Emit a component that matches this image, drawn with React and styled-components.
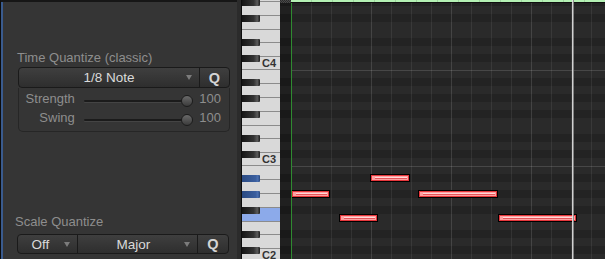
import React from 'react';
import styled, { createGlobalStyle } from 'styled-components';

const GlobalStyle = createGlobalStyle`
  html, body {
    margin: 0;
    padding: 0;
    background: #111;
  }
  body {
    font-family: "Liberation Sans", Arial, sans-serif;
  }
`;

const TOP_NOTE = 71;
const BOTTOM_NOTE = 36;
const ROW = 8;
const BLACK = [1, 3, 6, 8, 10];
const HIGHLIGHT = [46, 44, 41];

const pitches = [];
for (let n = TOP_NOTE; n >= BOTTOM_NOTE; n--) pitches.push(n);

const isBlack = (n) => BLACK.includes(n % 12);
const whiteKeys = pitches.filter((n) => !isBlack(n));
const blackKeys = pitches.filter(isBlack);
const keyHeight = (n) => ([0, 2, 4].includes(n % 12) ? 40 / 3 : 14);
const rowTop = (n) => (TOP_NOTE - n) * ROW;

const regions = [
  { pitch: 44, x: -1, w: 39 },
  { pitch: 41, x: 47, w: 39 },
  { pitch: 46, x: 78, w: 40 },
  { pitch: 44, x: 126, w: 80 },
  { pitch: 41, x: 206, w: 79 },
];

const App = () => {
  return (
    <>
      <GlobalStyle />
      <Screen>
        <Panel>
          <Section>
            <FieldLabel $indent={16}>Time Quantize (classic)</FieldLabel>
            <ButtonBar $indent={17} $h={21}>
              <Segment $grow $padL={17}>
                <SegText>1/8 Note</SegText>
                <Arrow />
              </Segment>
              <QButton $w={30}>Q</QButton>
            </ButtonBar>
            <SliderGroup>
              <SliderRow>
                <SliderLabel>Strength</SliderLabel>
                <Slider>
                  <Groove />
                  <Knob />
                </Slider>
                <ValueText>100</ValueText>
              </SliderRow>
              <SliderRow>
                <SliderLabel>Swing</SliderLabel>
                <Slider>
                  <Groove />
                  <Knob />
                </Slider>
                <ValueText>100</ValueText>
              </SliderRow>
            </SliderGroup>
          </Section>

          <Spacer />

          <Section>
            <FieldLabel $indent={14}>Scale Quantize</FieldLabel>
            <ButtonBar $indent={16} $h={20} $gap={4}>
              <Segment $w={59} $padL={3}>
                <SegText>Off</SegText>
                <Arrow />
              </Segment>
              <Segment $w={120} $padL={9} $divider>
                <SegText>Major</SegText>
                <Arrow />
              </Segment>
              <QButton $w={31}>Q</QButton>
            </ButtonBar>
          </Section>
        </Panel>

        <KeyGutter />

        <Piano>
          <PianoTrack>
            {whiteKeys.map((n) => (
              <WhiteKey key={n} $h={keyHeight(n)} $lit={HIGHLIGHT.includes(n)}>
                {n % 12 === 0 && <KeyName>C{n / 12 - 1}</KeyName>}
              </WhiteKey>
            ))}
            {blackKeys.map((n) => (
              <BlackKey key={n} $top={rowTop(n) + 1} $lit={HIGHLIGHT.includes(n)} />
            ))}
          </PianoTrack>
        </Piano>

        <Hatch>
          <HatchTop />
          <HatchTrack>
            {pitches.map((n) => (
              <HatchRow key={n} $black={isBlack(n)} />
            ))}
          </HatchTrack>
        </Hatch>

        <Roll>
          <Ruler />
          <Lane>
            <LaneTrack>
              {pitches.map((n) => (
                <GridRow key={n} $black={isBlack(n)} $octave={n % 12 === 11} />
              ))}
              {regions.map((r, i) => (
                <Region key={i} style={{ top: rowTop(r.pitch), left: r.x, width: r.w }} />
              ))}
            </LaneTrack>
          </Lane>
          <Playhead />
        </Roll>
      </Screen>
    </>
  );
};

export default App;

const Screen = styled.div`
  display: flex;
  width: 605px;
  height: 259px;
  overflow: hidden;
  background: #2a2a2a;
`;

/* ---------- left inspector ---------- */

const Panel = styled.div`
  width: 237px;
  flex-shrink: 0;
  box-sizing: border-box;
  height: 100%;
  display: flex;
  flex-direction: column;
  padding: 48px 0 5px;
  background: #353535;
  border-top: 2px solid #161616;
  border-left: 1px solid #0c0c0c;
  box-shadow: inset 2px 0 0 #3a5b8e;
`;

const Section = styled.div`
  display: flex;
  flex-direction: column;
`;

const Spacer = styled.div`
  flex: 1;
`;

const FieldLabel = styled.div`
  margin-left: ${(p) => p.$indent}px;
  font-size: 13px;
  line-height: 16px;
  color: #8e8e8e;
`;

const ButtonBar = styled.div`
  display: flex;
  box-sizing: border-box;
  width: 212px;
  height: ${(p) => p.$h}px;
  margin: ${(p) => p.$gap || 1}px 0 0 ${(p) => p.$indent}px;
  border: 1px solid #1a1a1a;
  border-radius: 4px;
  background: linear-gradient(#3f3f3f, #2e2e2e);
  position: relative;
  z-index: 1;
`;

const Segment = styled.div`
  display: flex;
  align-items: center;
  box-sizing: border-box;
  ${(p) => (p.$grow ? 'flex: 1;' : `width: ${p.$w}px;`)}
  padding: 0 7px 0 ${(p) => p.$padL}px;
  border-left: ${(p) => (p.$divider ? '1px solid #1a1a1a' : 'none')};
`;

const SegText = styled.span`
  flex: 1;
  text-align: center;
  font-size: 13.5px;
  color: #dadada;
`;

const Arrow = styled.span`
  width: 0;
  height: 0;
  margin-left: 4px;
  border-left: 3.5px solid transparent;
  border-right: 3.5px solid transparent;
  border-top: 5px solid #7c7c7c;
`;

const QButton = styled.div`
  display: flex;
  align-items: center;
  justify-content: center;
  box-sizing: border-box;
  width: ${(p) => p.$w}px;
  border-left: 1px solid #1a1a1a;
  font-size: 14.5px;
  font-weight: bold;
  color: #d4d4d4;
`;

const SliderGroup = styled.div`
  box-sizing: border-box;
  width: 212px;
  margin-left: 17px;
  padding: 1px 8px 4px 0;
  border: 1px solid #262626;
  border-top: none;
  border-radius: 0 0 5px 5px;
`;

const SliderRow = styled.div`
  display: flex;
  align-items: center;
  height: 19px;
`;

const SliderLabel = styled.div`
  width: 56px;
  text-align: right;
  font-size: 13px;
  color: #8e8e8e;
`;

const Slider = styled.div`
  position: relative;
  display: flex;
  align-items: center;
  box-sizing: border-box;
  width: 111px;
  height: 19px;
  padding-top: 4px;
  margin: 0 5px 0 9px;
`;

const Groove = styled.div`
  flex: 1;
  height: 2px;
  margin-right: 10px;
  border-radius: 1px;
  background: #1b1b1b;
  box-shadow: 0 1px 0 #444;
`;

const Knob = styled.div`
  position: absolute;
  right: 1px;
  top: calc(50% + 2px);
  transform: translateY(-50%);
  box-sizing: border-box;
  width: 12px;
  height: 12px;
  border-radius: 50%;
  border: 1px solid #1c1c1c;
  background: linear-gradient(#6a6a6a, #3b3b3b);
`;

const ValueText = styled.div`
  font-size: 13px;
  color: #8e8e8e;
`;

/* ---------- keyboard ---------- */

const KeyGutter = styled.div`
  width: 5px;
  flex-shrink: 0;
  box-sizing: border-box;
  background: #2b2b2b;
  border-right: 1px solid #0d0d0d;
`;

const Piano = styled.div`
  width: 38px;
  flex-shrink: 0;
  overflow: hidden;
  background: #d9d9d9;
`;

const PianoTrack = styled.div`
  position: relative;
  margin-top: -26px;
`;

const WhiteKey = styled.div`
  box-sizing: border-box;
  height: ${(p) => p.$h}px;
  display: flex;
  align-items: flex-end;
  justify-content: flex-end;
  padding-right: 4px;
  background: ${(p) => (p.$lit ? '#8caaea' : '#d9d9d9')};
  box-shadow: inset 0 -1px 0 #8b8b8b;
`;

const KeyName = styled.span`
  font-size: 11px;
  line-height: 11px;
  font-weight: bold;
  color: #333;
  margin-bottom: 1px;
`;

const BlackKey = styled.div`
  position: absolute;
  left: 0;
  top: ${(p) => p.$top}px;
  width: 18px;
  height: 7px;
  border-radius: 0 1px 1px 0;
  background: ${(p) =>
    p.$lit
      ? 'linear-gradient(to right, #2a4a82, #3a5e9e 75%, #4a6fb0 88%, #27467c)'
      : 'linear-gradient(to right, #151515, #333 65%, #5a5a5a 85%, #1c1c1c)'};
`;

/* ---------- piano roll ---------- */

const Hatch = styled.div`
  width: 11px;
  flex-shrink: 0;
  display: flex;
  flex-direction: column;
  overflow: hidden;
  background: #1c1c1c;
`;

const HatchTop = styled.div`
  height: 3px;
  flex-shrink: 0;
  position: relative;
  z-index: 1;
  background: repeating-conic-gradient(#4a4a4a 0 25%, #2a2a2a 0 50%) 0 0 / 2px 2px;
`;

const HatchTrack = styled.div`
  margin-top: -29px;
`;

const HatchRow = styled.div`
  height: ${ROW}px;
  background: ${(p) => (p.$black ? '#191919' : '#202020')};
`;

const Roll = styled.div`
  flex: 1;
  position: relative;
  display: flex;
  flex-direction: column;
  overflow: hidden;
`;

const Ruler = styled.div`
  height: 2px;
  flex-shrink: 0;
  position: relative;
  z-index: 1;
  background:
    repeating-linear-gradient(to right, transparent 0 20px, rgba(0, 0, 0, 0.12) 20px 21px),
    #b4f1b4;
  border-bottom: 1px solid #0f0f0f;
`;

const Lane = styled.div`
  flex: 1;
  position: relative;
  overflow: hidden;
  border-left: 1px solid #2f8a30;

  &::after {
    content: '';
    position: absolute;
    inset: 0;
    z-index: 1;
    pointer-events: none;
    background:
      repeating-linear-gradient(to right, transparent 0 79px, rgba(255, 255, 255, 0.06) 79px 80px),
      repeating-linear-gradient(to right, transparent 0 19px, rgba(255, 255, 255, 0.07) 19px 20px);
  }
`;

const LaneTrack = styled.div`
  position: relative;
  margin-top: -29px;
`;

const GridRow = styled.div`
  height: ${ROW}px;
  background: ${(p) => (p.$black ? '#232323' : '#2a2a2a')};
  box-shadow: ${(p) => (p.$octave ? 'inset 0 1px 0 #474747' : 'none')};
`;

const Region = styled.div`
  position: absolute;
  z-index: 2;
  height: ${ROW}px;
  box-sizing: border-box;
  border: 1px solid #000;
  background: #ff9fa0;
  box-shadow: inset 0 0 0 1px #e6363b;

  &::after {
    content: '';
    position: absolute;
    left: 4px;
    right: 2px;
    top: 2px;
    height: 1px;
    background: #ffd6d6;
    border-bottom: 1px solid #e6555a;
  }
`;

const Playhead = styled.div`
  position: absolute;
  top: 0;
  bottom: 0;
  left: 281px;
  width: 2px;
  z-index: 3;
  background: linear-gradient(to right, #e4e4e4 50%, #8a8a8a 50%);
  opacity: 0.9;
`;
